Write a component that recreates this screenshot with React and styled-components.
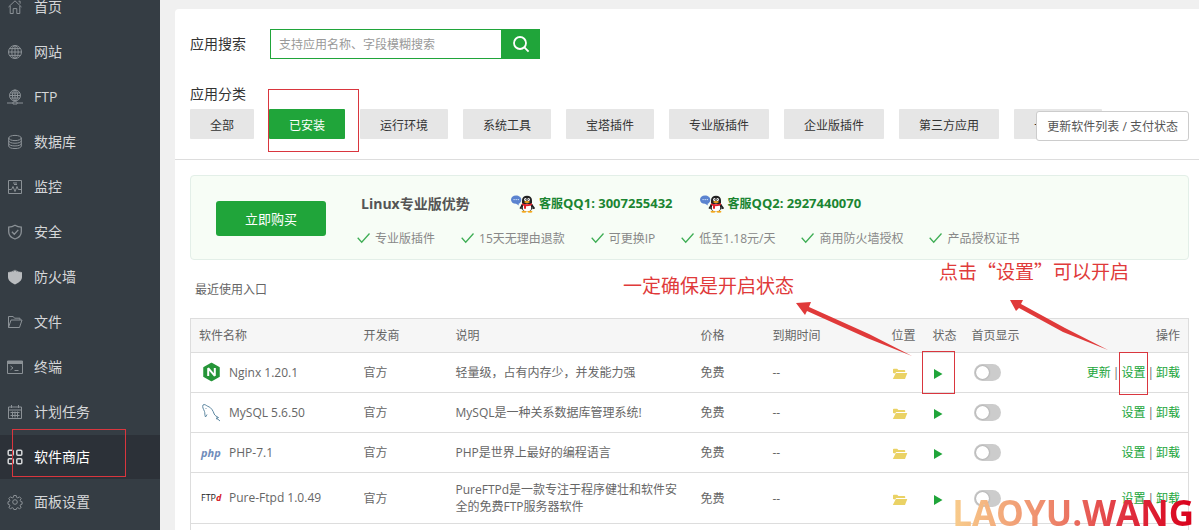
import { useState } from "react";
import styled, { createGlobalStyle } from "styled-components";

const GlobalStyle = createGlobalStyle`
  * {
    box-sizing: border-box;
  }
  body {
    margin: 0;
    background: #f0f0f0;
    color: #666;
    font-family: "Open Sans", "Noto Sans CJK SC", sans-serif;
    font-size: 12px;
    line-height: 17px;
  }
  button, input {
    font-family: inherit;
  }
  a {
    text-decoration: none;
  }
`;

const Page = styled.div`
  display: flex;
  position: relative;
  height: 100vh;
  overflow: hidden;
`;
// sidebar
const Sidebar = styled.nav`
  flex: 0 0 160px;
  background: #353d44;
`;
const MenuList = styled.ul`
  list-style: none;
  margin: -15px 0 0;
  padding: 0;
`;
const MenuItem = styled.li`
  position: relative;
  height: 45px;
`;
const MenuLink = styled.a`
  display: flex;
  align-items: center;
  gap: 11px;
  height: 44px;
  padding: 0 0 2px 7px;
  font-size: 14px;
  color: ${(props) => (props.$active ? "#fff" : "#d5d7d9")};
  background: ${(props) => (props.$active ? "#2c3138" : "transparent")};
  svg {
    flex: none;
    margin-top: 2px;
    color: ${(props) => (props.$active ? "#d5d7d9" : "#8b9196")};
  }
`;
// red frame drawn over the element it belongs to
const Mark = styled.span`
  position: absolute;
  top: ${(props) => props.$top}px;
  left: ${(props) => props.$left}px;
  width: ${(props) => props.$width}px;
  height: ${(props) => props.$height}px;
  border: 1px solid #d9363e;
  pointer-events: none;
  z-index: 3;
`;
// main content
const Main = styled.main`
  flex: 1;
  min-width: 0;
  padding: 9px 0 0 15px;
`;
const Card = styled.div`
  min-height: 100%;
  background: #fff;
  border-radius: 4px 0 0 0;
`;
const Filters = styled.section`
  position: relative;
  padding: 20px 10px 20px 15px;
  border-bottom: 1px solid #ddd;
`;
const SearchForm = styled.form`
  display: flex;
  align-items: center;
  height: 30px;
  margin-bottom: 25px;
`;
const FieldLabel = styled.label`
  width: 80px;
  padding-bottom: 2px;
  font-size: 14px;
  color: #333;
`;
const SearchInput = styled.input`
  width: 231px;
  height: 30px;
  padding: 0 8px;
  border: 1px solid #20a53a;
  border-right: none;
  outline: none;
  font-size: 12px;
  color: #333;
  &::placeholder {
    color: #999;
  }
`;
const SearchButton = styled.button`
  display: flex;
  align-items: center;
  justify-content: center;
  width: 39px;
  height: 30px;
  padding: 0;
  border: none;
  background: #20a53a;
  color: #fff;
`;
const GroupTitle = styled.div`
  height: 25px;
  line-height: 20px;
  font-size: 14px;
  color: #333;
`;
const TypeList = styled.div`
  display: flex;
  gap: 15px;
`;
const TypeItem = styled.div`
  position: relative;
  flex: none;
`;
const TypeButton = styled.button`
  display: block;
  height: 30px;
  padding: 1px 20px 0;
  border: none;
  border-radius: 1px;
  font-size: 12px;
  color: ${(props) => (props.$active ? "#fff" : "#333")};
  background: ${(props) => (props.$active ? "#20a53a" : "#e6e6e6")};
`;
const UpdateButton = styled.button`
  position: absolute;
  right: 10px;
  bottom: 18px;
  height: 30px;
  padding: 0 10px;
  border: 1px solid #ccc;
  border-radius: 3px;
  background: #fff;
  font-size: 12px;
  color: #555;
`;
const Content = styled.section`
  padding: 15px 10px 0 15px;
`;
const Banner = styled.div`
  display: flex;
  align-items: center;
  height: 85px;
  padding: 2px 25px 0;
  border: 1px solid #e3efe8;
  border-radius: 4px;
  background: #f7fdf6;
`;
const BuyButton = styled.button`
  flex: none;
  width: 110px;
  height: 35px;
  border: none;
  border-radius: 3px;
  background: #20a53a;
  color: #fff;
  font-size: 13px;
`;
const BannerBody = styled.div`
  padding-top: 3px;
  margin-left: 31px;
`;
const BannerTop = styled.div`
  display: flex;
  align-items: center;
  height: 20px;
  padding-left: 4px;
  margin-bottom: 16px;
`;
const BannerTitle = styled.h3`
  width: 150px;
  margin: 0;
  font-size: 14px;
  color: #555;
`;
const Service = styled.a`
  display: flex;
  align-items: center;
  margin-right: 27px;
  font-weight: 700;
  color: #1b8532;
  svg {
    margin-right: 4px;
  }
`;
const ServiceNumber = styled.span`
  font-size: 13px;
`;
const Features = styled.ul`
  display: flex;
  gap: 26px;
  margin: 0;
  padding: 0;
  list-style: none;
`;
const Feature = styled.li`
  display: flex;
  align-items: center;
  gap: 5px;
  color: #888;
  white-space: nowrap;
`;
const Recent = styled.div`
  height: 58px;
  padding: 0 5px;
  line-height: 60px;
`;
const Table = styled.table`
  width: 100%;
  table-layout: fixed;
  border-collapse: collapse;
  border: 1px solid #ddd;
`;
const Th = styled.th`
  width: ${(props) => (props.$width ? props.$width + "px" : "auto")};
  height: 34px;
  padding: 0 8px;
  background: #f6f6f6;
  font-weight: 400;
  text-align: ${(props) => (props.$right ? "right" : "left")};
  white-space: nowrap;
`;
const Td = styled.td`
  position: relative;
  height: 40px;
  padding: 8px;
  border-top: 1px solid #ddd;
  text-align: ${(props) => (props.$right ? "right" : "left")};
`;
const SoftName = styled.div`
  display: flex;
  align-items: center;
  gap: 7px;
  padding-bottom: 1px;
  svg {
    flex: none;
  }
`;
const IconButton = styled.button`
  display: flex;
  padding: 3px 0 0;
  border: none;
  background: none;
`;
const Switch = styled.input`
  appearance: none;
  display: block;
  width: 27px;
  height: 17px;
  margin: 0 0 0 2px;
  border-radius: 9px;
  background: #ccc;
  &::before {
    content: "";
    display: block;
    width: 13px;
    height: 13px;
    margin: 2px;
    border-radius: 50%;
    background: #fff;
    box-shadow: 0 0 2px #888;
  }
  &:checked {
    background: #20a53a;
  }
  &:checked::before {
    margin-left: 12px;
  }
`;
const Actions = styled.div`
  display: flex;
  justify-content: flex-end;
  gap: 2px;
`;
const Action = styled.a`
  position: relative;
  color: #20a53a;
`;
// notes on top of the page
const Note = styled.div`
  position: absolute;
  top: ${(props) => props.$top}px;
  left: ${(props) => props.$left}px;
  font-family: "Noto Sans CJK SC", sans-serif;
  font-size: 19px;
  line-height: 28px;
  color: #e03a3a;
  white-space: nowrap;
`;
const Arrows = styled.svg`
  position: absolute;
  top: 290px;
  left: 780px;
  pointer-events: none;
`;
const Watermark = styled.div`
  position: absolute;
  right: 5px;
  bottom: -7px;
  font-size: 35px;
  font-weight: 700;
  line-height: 48px;
  color: transparent;
  background: linear-gradient(90deg, #f8cd8c, #ee8a6c 40%, #e0303f 72%, #d9001b);
  background-clip: text;
  -webkit-background-clip: text;
`;

const menuIcons = {
  home: (
    <path d="M1.5 8 8 1.8 14.5 8M3.2 7v7.5h3V9.6h3.6v4.9h3V7M11.5 2.2h1.6v2.5" />
  ),
  site: (
    <>
      <circle cx="8" cy="8" r="6.5" />
      <ellipse cx="8" cy="8" rx="3.2" ry="6.5" />
      <path d="M8 1.5v13M1.5 8h13M2.5 4.6h11M2.5 11.4h11" />
    </>
  ),
  ftp: (
    <>
      <circle cx="8" cy="6.5" r="5.5" />
      <ellipse cx="8" cy="6.5" rx="2.6" ry="5.5" />
      <path d="M8 1v11M2.5 6.5h11M3.3 4h9.4M3.3 9h9.4M0 14h6M10 14h6M6 13h4v2H6z" />
    </>
  ),
  database: (
    <>
      <ellipse cx="8" cy="4" rx="6.3" ry="2.6" />
      <path d="M1.7 4v8c0 3.4 12.6 3.4 12.6 0V4M1.7 6.7c0 3.4 12.6 3.4 12.6 0M1.7 9.4c0 3.4 12.6 3.4 12.6 0" />
    </>
  ),
  monitor: (
    <path d="M1.5 1.5h13v13h-13zM2 10.5h2.5L6 7.5l2 5 2-5 1.3 3H14M6 4h4M7 5.5h3" />
  ),
  safe: (
    <path
      d="M8 1.2c2 1.3 4 1.9 6.3 2v4.5c0 3.4-2.6 6-6.3 7.3-3.7-1.3-6.3-3.9-6.3-7.3V3.2C4 3.1 6 2.5 8 1.2zM4.900 7.700l2.400 2.500 4-4.300"
      strokeWidth="1.300"
    />
  ),
  wall: (
    <path
      d="M1 3.500 2.500 2.500v1l2-1.500v1.200L6.500 1V3L8 .5 9.500 3V1l2 2.200V2l2 1.500v-1l1.500 1V8c0 3.500-3 5.500-7 7.500C4 13.500 1 11.500 1 8z"
      fill="#b9bcbf"
      stroke="none"
    />
  ),
  folder: (
    <path d="M1.500 13.500v-11h4.700l1.300 1.700h5.500V6M1.500 13.500 4 6h11l-2.500 7.500z" />
  ),
  terminal: (
    <>
      <path d="M.5 2h15v12.500H.5zM3.500 7l2.500 1.900-2.500 1.900M7.500 11.500h4" />
      <path d="M.5 3.500h15" strokeWidth="3" />
    </>
  ),
  task: (
    <path d="M1.500 3h13v11.500h-13zM1.500 6h13M4.500 1v3M11.500 1v3M3.500 8.500h9M3.500 11.500h9M5.500 7.500v6M8 7.500v6M10.500 7.500v6" />
  ),
  store: (
    <g strokeWidth="1.500">
      <rect x="1.200" y="1.200" width="5" height="5" rx="1" />
      <rect x="9.800" y="1.200" width="5" height="5" rx="1" />
      <rect x="1.200" y="9.800" width="5" height="5" rx="1" />
      <rect x="9.800" y="9.800" width="5" height="5" rx="1" />
    </g>
  ),
  setting: (
    <>
      <circle cx="8" cy="8" r="2.300" />
      <path d="M6.800 1.500h2.400l.4 1.900 1.200.5 1.700-1.100 1.700 1.700-1.100 1.700.5 1.200 1.500.4v2.400l-1.500.4-.5 1.200 1.100 1.700-1.700 1.200-1.700-1-1.200.5-.4 1.300H6.800l-.4-1.300-1.200-.5-1.700 1-1.700-1.200 1.100-1.700-.5-1.200-1.400-.4V7.800l1.400-.4.5-1.200-1.100-1.700 1.700-1.700 1.700 1.100 1.200-.5z" />
    </>
  ),
};

const MenuIcon = ({ name }) => (
  <svg
    width="16"
    height="16"
    viewBox="0 0 16 16"
    fill="none"
    stroke="currentColor"
    aria-hidden="true"
  >
    {menuIcons[name]}
  </svg>
);

const SearchIcon = () => (
  <svg width="18" height="18" viewBox="0 0 18 18" fill="none" stroke="#fff" strokeWidth="1.8">
    <circle cx="8" cy="8" r="6" />
    <path d="m12.400 12.400 4.200 4.200" />
  </svg>
);

const CheckIcon = () => (
  <svg width="13" height="12" viewBox="0 0 13 12" fill="none" stroke="#3fae55" strokeWidth="1.300">
    <path d="m.7 5.800 4 4.400L12.500 1.500" />
  </svg>
);

// penguin with a speech bubble
const QQIcon = () => (
  <svg width="24" height="18" viewBox="0 0 24 18">
    <path d="M5 .5c3 0 5.300 1.700 5.300 4.200S8.700 8.500 7.500 8.700L8 10.500 5 8.800C2 8.700 0 7 0 4.700S2 .5 5 .5z" fill="#5b83cf" />
    <path d="M2.500 4.600h1.200M4.600 4.600h1.200M6.700 4.600h1.200" stroke="#dce8fb" />
    <path d="M11.500 9.500 9.500 13l1.200.5M20.500 9.500l2.500 3.500-1.500.5" stroke="#222" strokeWidth="1.500" fill="none" />
    <ellipse cx="16" cy="11.500" rx="5.800" ry="5.200" fill="#222" />
    <ellipse cx="16" cy="12.800" rx="4.200" ry="4" fill="#fff" />
    <path d="M11 8V5.500C11 2.500 13 .7 16 .7s5 1.800 5 4.800V8z" fill="#222" />
    <ellipse cx="14.400" cy="4.500" rx="1.300" ry="1.600" fill="#fff" />
    <ellipse cx="17.600" cy="4.500" rx="1.300" ry="1.600" fill="#fff" />
    <path d="M14.500 4h.8v1h-.8zM16.800 4h.8v1h-.8z" fill="#111" />
    <ellipse cx="16" cy="7" rx="2.800" ry=".9" fill="#f5a91b" />
    <path d="M11 8.300c3 1.400 7 1.400 10 0v1.800c-2 .8-4 1.200-6 1.200v2.500h-2v-3l-2-.7z" fill="#e0222b" />
    <ellipse cx="13" cy="16.700" rx="2.500" ry="1" fill="#f5a91b" />
    <ellipse cx="19" cy="16.700" rx="2.500" ry="1" fill="#f5a91b" />
  </svg>
);

const FolderIcon = () => (
  <svg width="16" height="12" viewBox="0 0 16 12" fill="#ead265">
    <path d="M1 5V1.500C1 1 1.300.7 1.800.7h3.400l1.200 1.200h6c.5 0 .8.300.8.800V4H4.300L3 5.500z" />
    <path d="M3.800 5h11.500l-2.300 6H.8z" />
  </svg>
);

const PlayIcon = () => (
  <svg width="10" height="12" viewBox="0 0 10 12" fill="#20a53a">
    <path d="M1 1v10l8.500-5z" />
  </svg>
);

const NginxLogo = () => (
  <svg width="23" height="20" viewBox="0 0 23 20">
    <path
      d="M12.500 1.500 20 5.600v8.800l-7.500 4.100L5 14.400V5.600z"
      fill="#269539"
      stroke="#269539"
      strokeWidth="1.500"
      strokeLinejoin="round"
    />
    <path
      d="M9.200 14V6.200l6.600 7.600V6"
      stroke="#fff"
      strokeWidth="2"
      strokeLinejoin="bevel"
      fill="none"
    />
  </svg>
);

const MysqlLogo = () => (
  <svg width="23" height="20" viewBox="0 0 23 20" fill="none" stroke="#5d87a1">
    <path d="M8 12.500 6.500 15c-1-2-.4-4-1-5.500C4.500 7 3 5 4 3c1.500-1.200 3 .3 4.200 1 4 1 6 5 7 8 .5 1.500 2.500 2.500 4.300 3.500l-2 .5 3.500 3M17.500 16l.5 1.500" />
    <path d="M7 6v.8" />
  </svg>
);

const LogoText = styled.span`
  flex: none;
  width: 23px;
  padding-left: 2px;
  font-size: ${(props) => props.$size}px;
  font-style: ${(props) => (props.$italic ? "italic" : "normal")};
  font-weight: ${(props) => (props.$italic ? 700 : 400)};
  line-height: 17px;
  color: ${(props) => props.$color};
  b {
    color: #d5202a;
    font-style: italic;
  }
`;

const PhpLogo = () => (
  <LogoText $size={11} $italic $color="#6f8cbb">
    php
  </LogoText>
);

const FtpLogo = () => (
  <LogoText $size={9} $color="#222">
    FTP<b>d</b>
  </LogoText>
);

const menus = [
  { name: "首页", icon: "home" },
  { name: "网站", icon: "site" },
  { name: "FTP", icon: "ftp" },
  { name: "数据库", icon: "database" },
  { name: "监控", icon: "monitor" },
  { name: "安全", icon: "safe" },
  { name: "防火墙", icon: "wall" },
  { name: "文件", icon: "folder" },
  { name: "终端", icon: "terminal" },
  { name: "计划任务", icon: "task" },
  { name: "软件商店", icon: "store" },
  { name: "面板设置", icon: "setting" },
];

const types = [
  "全部",
  "已安装",
  "运行环境",
  "系统工具",
  "宝塔插件",
  "专业版插件",
  "企业版插件",
  "第三方应用",
  "一键部署",
];

const features = [
  "专业版插件",
  "15天无理由退款",
  "可更换IP",
  "低至1.18元/天",
  "商用防火墙授权",
  "产品授权证书",
];

const softs = [
  { name: "Nginx 1.20.1", logo: <NginxLogo />, ps: "轻量级，占有内存少，并发能力强", update: true },
  { name: "MySQL 5.6.50", logo: <MysqlLogo />, ps: "MySQL是一种关系数据库管理系统!" },
  { name: "PHP-7.1", logo: <PhpLogo />, ps: "PHP是世界上最好的编程语言" },
  { name: "Pure-Ftpd 1.0.49", logo: <FtpLogo />, ps: "PureFTPd是一款专注于程序健壮和软件安全的免费FTP服务器软件" },
];

function SoftRow({ soft, marked }) {
  return (
    <tr>
      <Td>
        <SoftName>
          {soft.logo}
          {soft.name}
        </SoftName>
      </Td>
      <Td>官方</Td>
      <Td>{soft.ps}</Td>
      <Td>免费</Td>
      <Td>--</Td>
      <Td>
        <IconButton aria-label="打开目录">
          <FolderIcon />
        </IconButton>
      </Td>
      <Td>
        <IconButton aria-label="运行中">
          <PlayIcon />
        </IconButton>
        {marked && <Mark $top={-2} $left={-3} $width={33} $height={43} />}
      </Td>
      <Td>
        <Switch type="checkbox" aria-label={soft.name + " 首页显示"} />
      </Td>
      <Td $right>
        <Actions>
          {soft.update && (
            <>
              <Action href="#">更新</Action>|
            </>
          )}
          <Action href="#">
            设置
            {marked && <Mark $top={-12} $left={-2} $width={29} $height={43} />}
          </Action>
          |<Action href="#">卸载</Action>
        </Actions>
      </Td>
    </tr>
  );
}

export default function App() {
  const [type, setType] = useState("已安装");
  const [keyword, setKeyword] = useState("");

  return (
    <>
      <GlobalStyle />
      <Page>
        <Sidebar>
          <MenuList>
            {menus.map((item) => (
              <MenuItem key={item.name}>
                <MenuLink href="#" $active={item.icon === "store"}>
                  <MenuIcon name={item.icon} />
                  {item.name}
                </MenuLink>
                {item.icon === "store" && (
                  <Mark $top={-6} $left={12} $width={114} $height={48} />
                )}
              </MenuItem>
            ))}
          </MenuList>
        </Sidebar>
        <Main>
          <Card>
            <Filters>
              <SearchForm onSubmit={(event) => event.preventDefault()}>
                <FieldLabel htmlFor="keyword">应用搜索</FieldLabel>
                <SearchInput
                  id="keyword"
                  value={keyword}
                  onChange={(event) => setKeyword(event.target.value)}
                  placeholder="支持应用名称、字段模糊搜索"
                />
                <SearchButton type="submit" aria-label="搜索">
                  <SearchIcon />
                </SearchButton>
              </SearchForm>
              <GroupTitle>应用分类</GroupTitle>
              <TypeList>
                {types.map((item) => (
                  <TypeItem key={item}>
                    <TypeButton $active={item === type} onClick={() => setType(item)}>
                      {item}
                    </TypeButton>
                    {item === "已安装" && (
                      <Mark $top={-20} $left={-1} $width={91} $height={63} />
                    )}
                  </TypeItem>
                ))}
              </TypeList>
              <UpdateButton>更新软件列表 / 支付状态</UpdateButton>
            </Filters>
            <Content>
              <Banner>
                <BuyButton>立即购买</BuyButton>
                <BannerBody>
                  <BannerTop>
                    <BannerTitle>Linux专业版优势</BannerTitle>
                    <Service href="#">
                      <QQIcon />
                      客服<ServiceNumber>QQ1: 3007255432</ServiceNumber>
                    </Service>
                    <Service href="#">
                      <QQIcon />
                      客服<ServiceNumber>QQ2: 2927440070</ServiceNumber>
                    </Service>
                  </BannerTop>
                  <Features>
                    {features.map((item) => (
                      <Feature key={item}>
                        <CheckIcon />
                        {item}
                      </Feature>
                    ))}
                  </Features>
                </BannerBody>
              </Banner>
              <Recent>最近使用入口</Recent>
              <Table>
                <thead>
                  <tr>
                    <Th $width={165}>软件名称</Th>
                    <Th $width={92}>开发商</Th>
                    <Th $width={245}>说明</Th>
                    <Th $width={72}>价格</Th>
                    <Th $width={119}>到期时间</Th>
                    <Th $width={41}>位置</Th>
                    <Th $width={39}>状态</Th>
                    <Th $width={80}>首页显示</Th>
                    <Th $right>操作</Th>
                  </tr>
                </thead>
                <tbody>
                  {softs.map((soft, index) => (
                    <SoftRow key={soft.name} soft={soft} marked={index === 0} />
                  ))}
                  <tr>
                    <Td colSpan={9} />
                  </tr>
                </tbody>
              </Table>
            </Content>
          </Card>
        </Main>
        <Note $top={271} $left={623}>一定确保是开启状态</Note>
        <Note $top={257} $left={939}>点击“设置”可以开启</Note>
        <Arrows width="340" height="70" viewBox="0 0 340 70" fill="#e03a3a">
          <path d="M16 13 31 12 29 17 89 44 132 66 87 48 27 21 25 25z" />
          <path d="M230 10 243 10 241 14 285 38 328 60 283 42 239 18 236 21z" />
        </Arrows>
        <Watermark>LAOYU.WANG</Watermark>
      </Page>
    </>
  );
}
